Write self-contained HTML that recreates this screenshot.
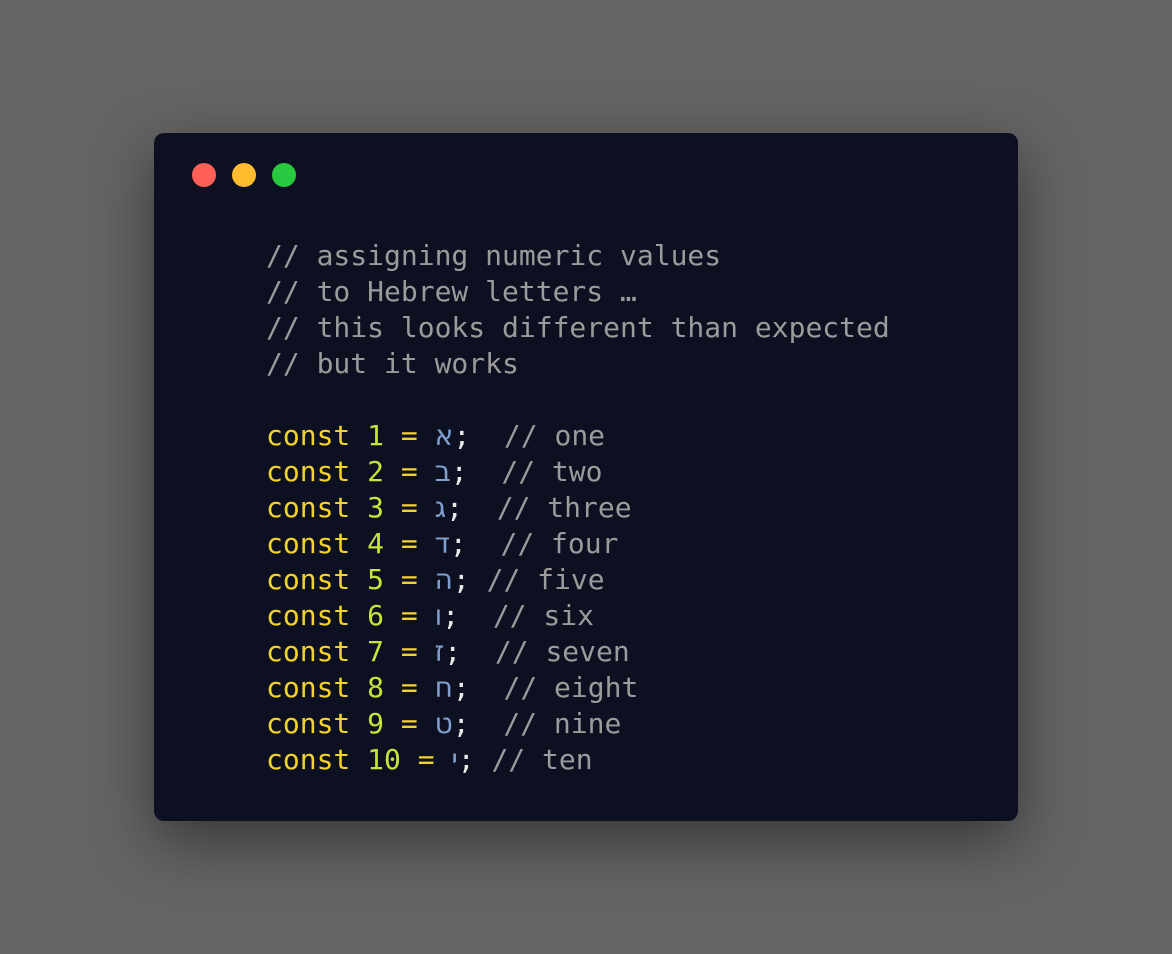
<!DOCTYPE html>
<html><head><meta charset="utf-8"><style>
html,body{margin:0;padding:0}
body{width:1172px;height:954px;background:#646464;position:relative;overflow:hidden}
.win{position:absolute;left:154px;top:133px;width:864px;height:688px;background:#0d1020;border-radius:10px;box-shadow:0 20px 60px rgba(0,0,0,0.45)}
.dot{position:absolute;top:30px;width:24px;height:24px;border-radius:50%}
pre{position:absolute;left:112px;top:105px;margin:0;font-family:"DejaVu Sans Mono","Liberation Mono",monospace;font-size:28px;line-height:36px;color:#e8e8e8}
.c{color:#9b9b9b}.k{color:#f2d22c}.n{color:#c6e33a}.h{color:#7f9fcf;font-family:"DejaVu Sans",sans-serif}
</style></head><body>
<div class="win">
<div class="dot" style="left:38px;background:#fe5f57"></div>
<div class="dot" style="left:78px;background:#febc2e"></div>
<div class="dot" style="left:118px;background:#28c840"></div>
<pre><span class="c">// assigning numeric values
// to Hebrew letters …
// this looks different than expected
// but it works</span>

<span class="k">const</span> <span class="n">1</span> <span class="k">=</span> <bdi class="h">א</bdi>;  <span class="c">// one</span>
<span class="k">const</span> <span class="n">2</span> <span class="k">=</span> <bdi class="h">ב</bdi>;  <span class="c">// two</span>
<span class="k">const</span> <span class="n">3</span> <span class="k">=</span> <bdi class="h">ג</bdi>;  <span class="c">// three</span>
<span class="k">const</span> <span class="n">4</span> <span class="k">=</span> <bdi class="h">ד</bdi>;  <span class="c">// four</span>
<span class="k">const</span> <span class="n">5</span> <span class="k">=</span> <bdi class="h">ה</bdi>; <span class="c">// five</span>
<span class="k">const</span> <span class="n">6</span> <span class="k">=</span> <bdi class="h">ו</bdi>;  <span class="c">// six</span>
<span class="k">const</span> <span class="n">7</span> <span class="k">=</span> <bdi class="h">ז</bdi>;  <span class="c">// seven</span>
<span class="k">const</span> <span class="n">8</span> <span class="k">=</span> <bdi class="h">ח</bdi>;  <span class="c">// eight</span>
<span class="k">const</span> <span class="n">9</span> <span class="k">=</span> <bdi class="h">ט</bdi>;  <span class="c">// nine</span>
<span class="k">const</span> <span class="n">10</span> <span class="k">=</span> <bdi class="h">י</bdi>; <span class="c">// ten</span></pre>
</div>
</body></html>
